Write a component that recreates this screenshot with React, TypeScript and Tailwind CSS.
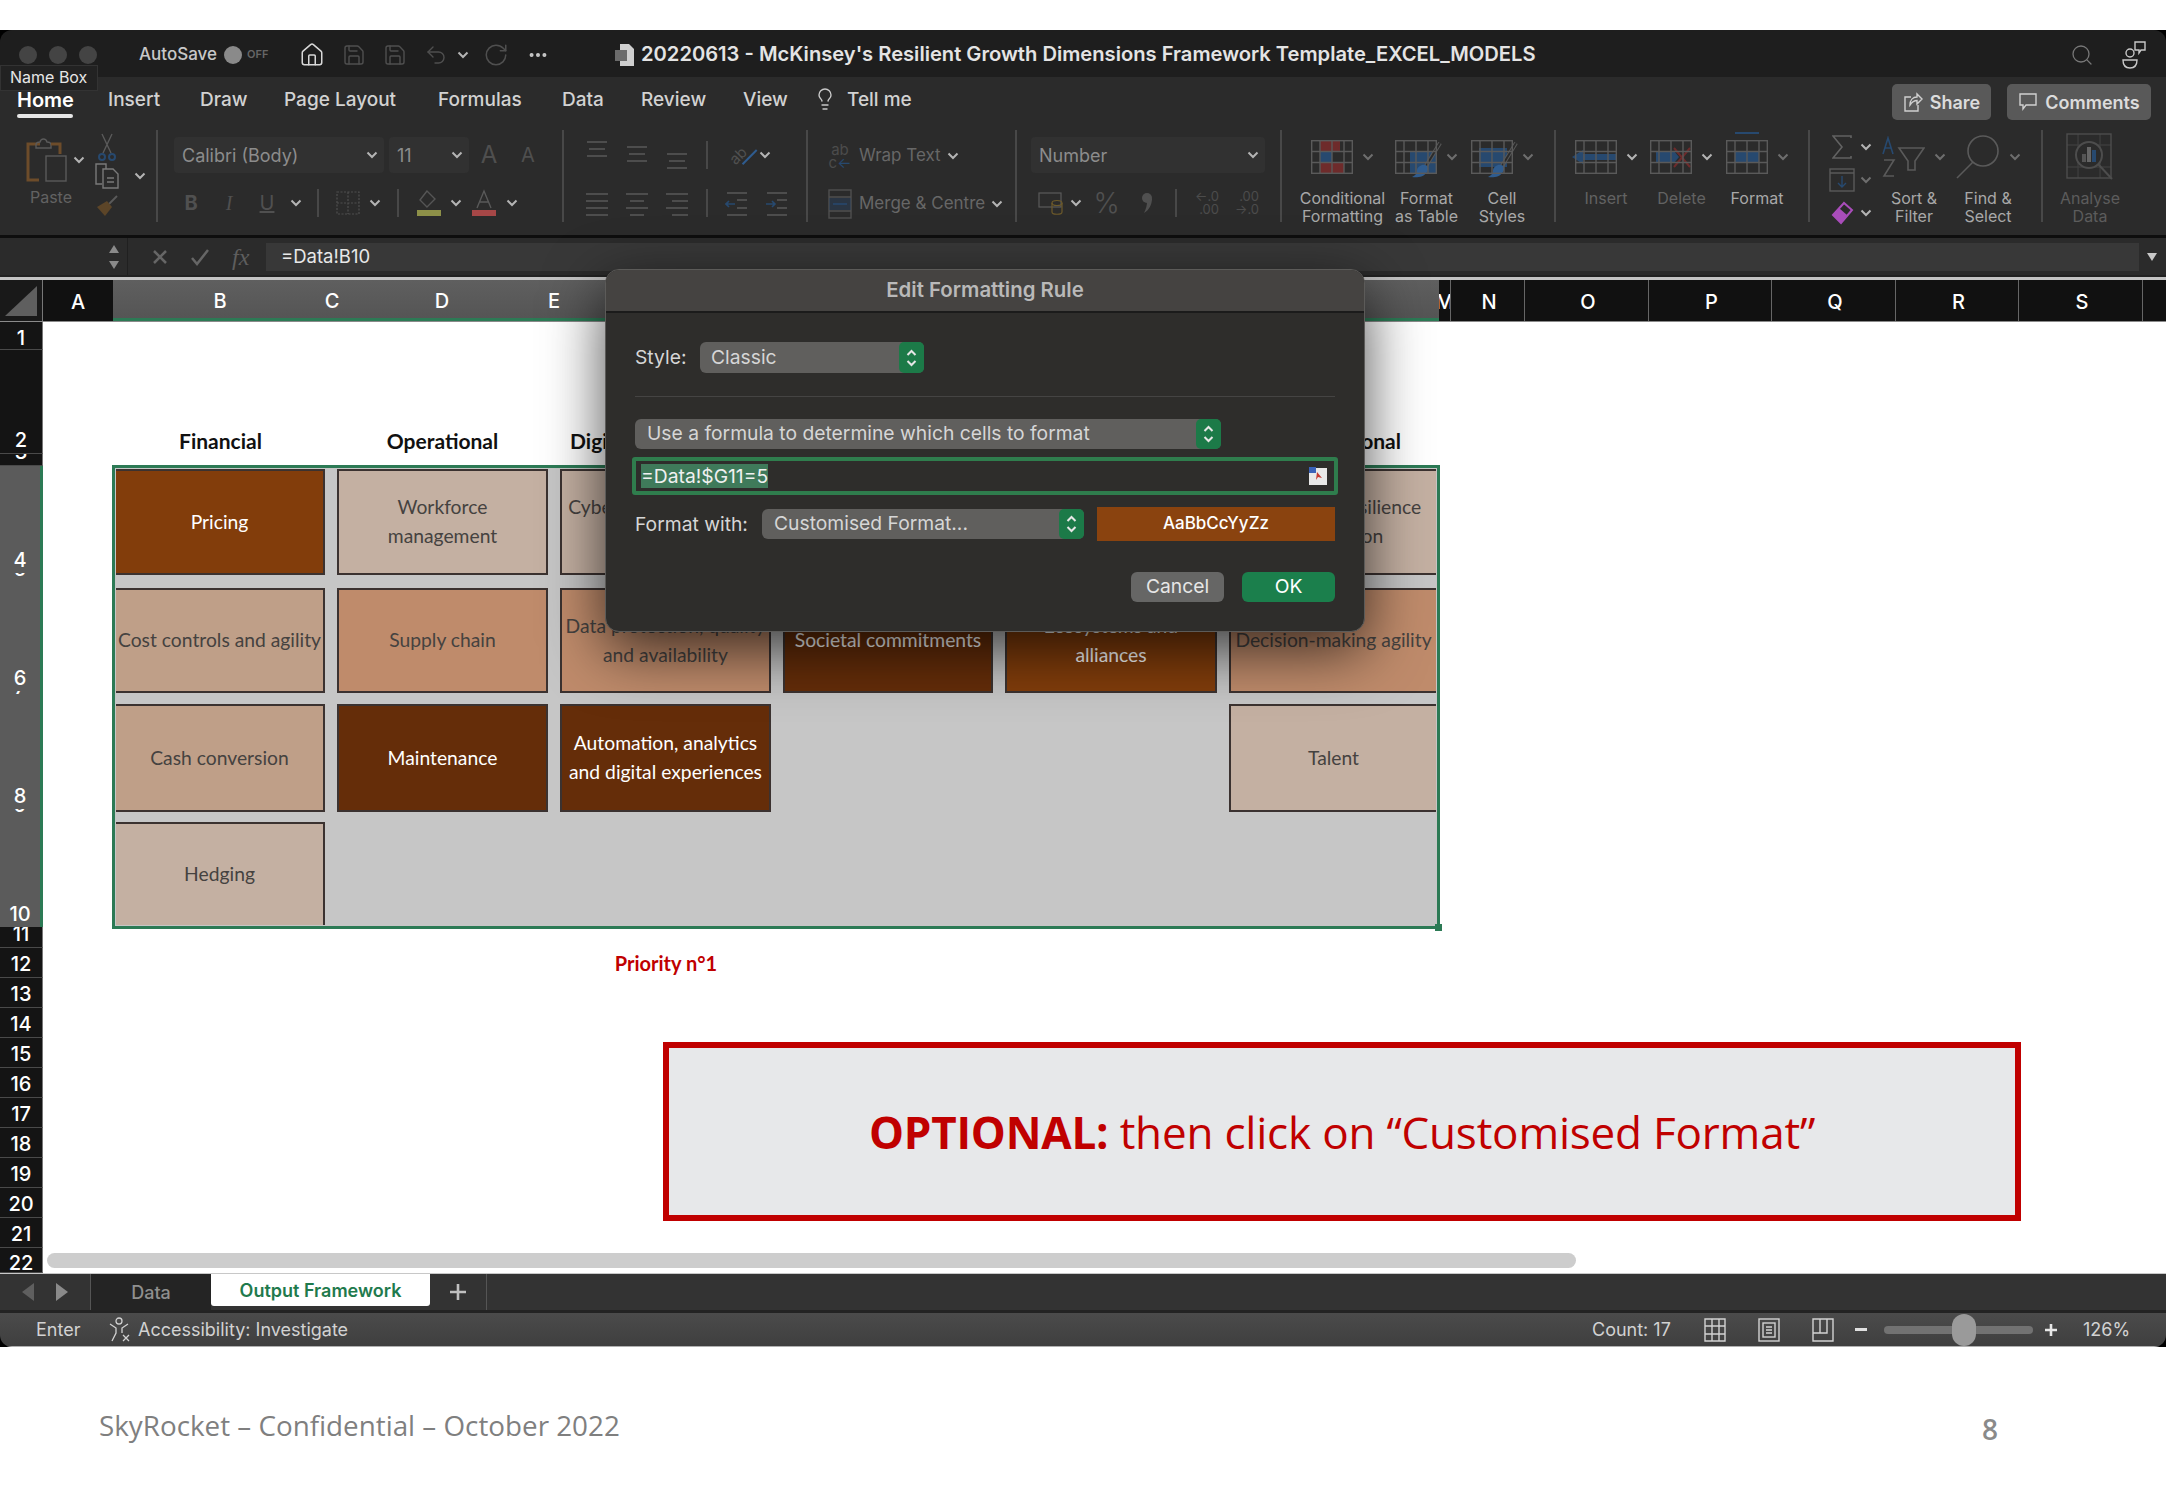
import { ReactNode } from 'react';
import { Ellipsis, House, Lightbulb, RotateCw, Save, Search, Undo2 } from 'lucide-react';

const DIM = '#5a5a5a';
const BLUE = '#27496f';
const RED = '#6e2b2b';

function Chev({ dim = false }: { dim?: boolean }) {
  return (
    <svg width="12" height="8" viewBox="0 0 12 8" className={dim ? 'text-[#6e6e6e] shrink-0' : 'text-[#b4b4b4] shrink-0'}>
      <path d="M1.5 1.5 6 6l4.5-4.5" fill="none" stroke="currentColor" strokeWidth="2" />
    </svg>
  );
}

function TableGrid({ children, top = false }: { children?: ReactNode; top?: boolean }) {
  return (
    <svg width="42" height="34" viewBox="0 0 42 34" className="shrink-0 overflow-visible">
      {children}
      <g fill="none" stroke={DIM} strokeWidth="1.4">
        <rect x="0.7" y="0.7" width="40.6" height="32.6" />
        <path d="M0 11.5h42M0 22.5h42M9 0v34M21 0v34M33 0v34" />
        {top && <path d="M9 -7h24" strokeWidth="2" stroke={BLUE} />}
      </g>
    </svg>
  );
}

function Brush() {
  return (
    <g>
      <path d="M45 3 31 26" stroke={DIM} strokeWidth="4" fill="none" />
      <path d="M45 3 31 26" stroke="#2b2b2b" strokeWidth="2" fill="none" />
      <path d="M27 25c5-1 8 3 5 7-3 5-10 6-15 5 4-2 5-4 5-7 0-2 2-4 5-5Z" fill="#2f5c8f" />
    </g>
  );
}

function Slot({ className, children }: { className: string; children?: ReactNode }) {
  return <div className={`flex items-center justify-center shrink-0 ${className}`}>{children}</div>;
}

function Sep() {
  return <div className="w-[2px] h-[28px] bg-[#484848]" />;
}

function Lines({ rows }: { rows: string[] }) {
  return (
    <svg width="24" height="30" viewBox="0 0 24 30">
      {rows.map((d, i) => (
        <path key={i} d={d} stroke={DIM} strokeWidth="1.6" fill="none" />
      ))}
    </svg>
  );
}

function Big({
  className,
  icon,
  label,
  dim = false,
  dimChev = false,
}: {
  className: string;
  icon: ReactNode;
  label: string[];
  dim?: boolean;
  dimChev?: boolean;
}) {
  return (
    <div className={`flex flex-col items-center shrink-0 ${className}`}>
      <div className="h-[54px] shrink-0 flex items-center gap-[9px]">
        {icon}
        <Chev dim={dimChev} />
      </div>
      <div className={`mt-[5px] shrink-0 text-[16px] leading-[18px] text-center whitespace-nowrap ${dim ? 'text-[#626262]' : 'text-[#a8a8a8]'}`}>
        {label.map((l) => (
          <div key={l}>{l}</div>
        ))}
      </div>
    </div>
  );
}

function Dropdown({ className, label }: { className: string; label: string }) {
  return (
    <div className={`h-[36px] rounded-[4px] bg-[#313131] flex items-center justify-between pl-[8px] pr-[6px] text-[18px] text-[#8c8c8c] shrink-0 ${className}`}>
      {label}
      <Chev />
    </div>
  );
}

function Ribbon() {
  return (
    <div className="h-[158px] bg-[#2b2b2b] shrink-0">
      <div className="h-[53px] flex justify-between pl-[17px] pr-[15px] pt-[7px]">
        <div className="flex text-[19px] text-[#d2d2d2] font-medium">
          <div className="w-[91px]">
            <div className="w-[56px] text-white font-semibold text-[20px] pt-[2px] h-[30px] leading-[28px]">Home</div>
            <div className="w-[56px] h-[4px] bg-[#e6e6e6] rounded-full" />
          </div>
          <div className="w-[92px] pt-[2px] leading-[28px]">Insert</div>
          <div className="w-[84px] pt-[2px] leading-[28px]">Draw</div>
          <div className="w-[154px] pt-[2px] leading-[28px]">Page Layout</div>
          <div className="w-[124px] pt-[2px] leading-[28px]">Formulas</div>
          <div className="w-[79px] pt-[2px] leading-[28px]">Data</div>
          <div className="w-[102px] pt-[2px] leading-[28px]">Review</div>
          <div className="w-[70px] pt-[2px] leading-[28px]">View</div>
          <div className="w-[34px] pt-[3px]">
            <Lightbulb size={24} strokeWidth={1.4} className="text-[#c8c8c8]" />
          </div>
          <div className="pt-[2px] leading-[28px]">Tell me</div>
        </div>
        <div className="flex gap-[16px] h-[36px] text-[18px] font-semibold text-[#dcdcdc]">
          <div className="w-[99px] rounded-[5px] bg-[#595959] flex items-center justify-center gap-[7px]">
            <svg width="20" height="22" viewBox="0 0 20 22" fill="none" stroke="#d0d0d0" strokeWidth="1.4">
              <path d="M8 6H2v14h13v-6M7 14c0-5 3-8 7-8V3l5 5-5 5V9.5c-3 0-5 1.5-7 4.5Z" />
            </svg>
            Share
          </div>
          <div className="w-[144px] rounded-[5px] bg-[#595959] flex items-center justify-center gap-[7px]">
            <svg width="20" height="22" viewBox="0 0 20 22" fill="none" stroke="#d0d0d0" strokeWidth="1.4">
              <path d="M2 3h16v11H8l-3 4v-4H2Z" />
            </svg>
            Comments
          </div>
        </div>
      </div>

      <div className="flex h-[92px]">
        {/* clipboard */}
        <div className="w-[158px] border-r-2 border-[#484848] flex pl-[26px] shrink-0">
          <div className="w-[60px] shrink-0">
            <div className="h-[44px] mt-[8px] flex items-center gap-[6px]">
              <svg width="41" height="44" viewBox="0 0 41 44" fill="none" className="shrink-0">
                <path d="M14 6H2v36h11" stroke="#6d4c2a" strokeWidth="3" />
                <path d="M10 7c0-3 3-3 4-3 1-4 6-4 7 0 1 0 4 0 4 3v3H10Z" stroke={DIM} strokeWidth="1.4" />
                <path d="M25 6h9v10" stroke="#6d4c2a" strokeWidth="3" />
                <rect x="20" y="18" width="20" height="25" stroke={DIM} strokeWidth="1.4" />
              </svg>
              <Chev />
            </div>
            <div className="w-[50px] text-center mt-[6px] text-[16px] leading-[18px] text-[#626262]">Paste</div>
          </div>
          <div className="flex flex-col">
            <Slot className="w-[42px] h-[33px]">
              <svg width="18" height="28" viewBox="0 0 18 28" fill="none" stroke={DIM} strokeWidth="1.4">
                <path d="M4 1l9 19M14 1 5 20" />
                <circle cx="4" cy="24" r="3" stroke={BLUE} strokeWidth="2" />
                <circle cx="14" cy="24" r="3" stroke={BLUE} strokeWidth="2" />
              </svg>
            </Slot>
            <div className="flex items-center h-[33px]">
              <Slot className="w-[42px]">
                <svg width="26" height="26" viewBox="0 0 26 26" fill="none" stroke="#7a7a7a" strokeWidth="1.4">
                  <path d="M8 21H2V1h10v5M9 6h10l5 5v14H9Z" />
                  <path d="M13 15h7M13 19h7" />
                </svg>
              </Slot>
              <div className="ml-[6px]">
                <Chev />
              </div>
            </div>
            <Slot className="w-[42px] h-[33px]">
              <svg width="24" height="24" viewBox="0 0 24 24" fill="none">
                <path d="M14 10 22 2" stroke={DIM} strokeWidth="2" />
                <path d="M2 13 12 7l5 6-7 9Z" fill="#5c4528" />
              </svg>
            </Slot>
          </div>
        </div>

        {/* font */}
        <div className="w-[406px] border-r-2 border-[#484848] shrink-0 flex flex-col">
          <div className="h-[50px] flex items-start pt-[7px] pl-[16px]">
            <Dropdown className="w-[210px] mr-[5px]" label="Calibri (Body)" />
            <Dropdown className="w-[80px]" label="11" />
            <Slot className="w-[40px] h-[36px] text-[24px] text-[#4f4f4f]">A</Slot>
            <Slot className="w-[38px] h-[36px] text-[20px] text-[#4f4f4f]">A</Slot>
          </div>
          <div className="h-[42px] pt-[4px] flex items-center pl-[14px] text-[20px] text-[#505050]">
            <Slot className="w-[38px] font-bold">B</Slot>
            <Slot className="w-[38px] italic font-['Liberation_Serif',serif]">I</Slot>
            <Slot className="w-[38px] underline">U</Slot>
            <Slot className="w-[20px]"><Chev /></Slot>
            <Slot className="w-[24px]"><Sep /></Slot>
            <Slot className="w-[36px]">
              <svg width="24" height="24" viewBox="0 0 24 24" fill="none" stroke="#4f4f4f" strokeWidth="1.2" strokeDasharray="2 1.5">
                <path d="M1 1h22v22H1ZM12 1v22M1 12h22" />
              </svg>
            </Slot>
            <Slot className="w-[18px]"><Chev /></Slot>
            <Slot className="w-[28px]"><Sep /></Slot>
            <Slot className="w-[34px]">
              <svg width="26" height="28" viewBox="0 0 26 28" fill="none">
                <path d="M11 2 4 11l7 7 8-8Z" stroke="#555" strokeWidth="1.4" />
                <rect x="1" y="21" width="24" height="6" fill="#8d9048" />
              </svg>
            </Slot>
            <Slot className="w-[20px]"><Chev /></Slot>
            <Slot className="w-[36px]">
              <svg width="26" height="28" viewBox="0 0 26 28" fill="none">
                <path d="M6 19 13 2l7 17M9 13h8" stroke="#595959" strokeWidth="1.4" />
                <rect x="1" y="21" width="24" height="6" fill="#a64747" />
              </svg>
            </Slot>
            <Slot className="w-[20px]"><Chev /></Slot>
          </div>
        </div>

        {/* alignment */}
        <div className="w-[244px] border-r-2 border-[#484848] shrink-0 flex flex-col pl-[13px]">
          <div className="h-[50px] flex items-center">
            <Slot className="w-[40px]"><Lines rows={['M2 2h20', 'M4 9h16', 'M2 16h20']} /></Slot>
            <Slot className="w-[40px]"><Lines rows={['M2 7h20', 'M4 14h16', 'M2 21h20']} /></Slot>
            <Slot className="w-[40px]"><Lines rows={['M2 14h20', 'M4 21h16', 'M2 28h20']} /></Slot>
            <Slot className="w-[20px]"><Sep /></Slot>
            <Slot className="w-[42px]">
              <div className="text-[15px] leading-none text-[#505050] -rotate-45 relative">
                ab
                <span className="absolute left-[6px] top-[16px] w-[20px] h-[2px] bg-[#2f5c8f]" />
              </div>
            </Slot>
            <Slot className="w-[12px]"><Chev /></Slot>
          </div>
          <div className="h-[42px] pt-[4px] flex items-center">
            <Slot className="w-[40px]"><Lines rows={['M1 6h22', 'M1 13h22', 'M1 20h22', 'M1 27h22']} /></Slot>
            <Slot className="w-[40px]"><Lines rows={['M1 6h22', 'M5 13h14', 'M1 20h22', 'M5 27h14']} /></Slot>
            <Slot className="w-[40px]"><Lines rows={['M1 6h22', 'M7 13h16', 'M1 20h22', 'M7 27h16']} /></Slot>
            <Slot className="w-[20px]"><Sep /></Slot>
            <Slot className="w-[40px]">
              <svg width="24" height="30" viewBox="0 0 24 30" fill="none" stroke={DIM} strokeWidth="1.6">
                <path d="M2 5h20M12 12h10M12 20h10M2 27h20" />
                <path d="M10 16H1m3-3-3 3 3 3" stroke={BLUE} />
              </svg>
            </Slot>
            <Slot className="w-[40px]">
              <svg width="24" height="30" viewBox="0 0 24 30" fill="none" stroke={DIM} strokeWidth="1.6">
                <path d="M2 5h20M12 12h10M12 20h10M2 27h20" />
                <path d="M1 16h9m-3-3 3 3-3 3" stroke={BLUE} />
              </svg>
            </Slot>
          </div>
        </div>

        {/* wrap / merge */}
        <div className="w-[209px] border-r-2 border-[#484848] shrink-0 flex flex-col pl-[18px] text-[17px] text-[#676767]">
          <div className="h-[50px] flex items-center pt-[2px]">
            <Slot className="w-[28px]">
              <div className="text-[15px] leading-[13px] text-[#4c4c4c] text-center">ab<br />c<span className="text-[#27496f]">←</span></div>
            </Slot>
            <span className="ml-[5px] mr-[6px] whitespace-nowrap">Wrap Text</span>
            <Chev />
          </div>
          <div className="h-[42px] pt-[6px] flex items-center">
            <Slot className="w-[28px]">
              <svg width="24" height="30" viewBox="0 0 24 30" fill="none" stroke="#505050" strokeWidth="1.4">
                <rect x="1" y="1" width="22" height="28" />
                <path d="M1 8h22M1 22h22" />
                <rect x="1" y="9" width="22" height="12" fill={BLUE} stroke="none" opacity="0.35" />
                <path d="M5 15h14" stroke={BLUE} />
              </svg>
            </Slot>
            <span className="ml-[5px] mr-[6px] whitespace-nowrap">Merge &amp; Centre</span>
            <Chev />
          </div>
        </div>

        {/* number */}
        <div className="w-[265px] border-r-2 border-[#484848] shrink-0 flex flex-col">
          <div className="h-[50px] flex items-start pt-[7px] pl-[14px]">
            <Dropdown className="w-[234px]" label="Number" />
          </div>
          <div className="h-[42px] pt-[4px] flex items-center pl-[18px] text-[#505050]">
            <Slot className="w-[31px]">
              <svg width="26" height="26" viewBox="0 0 26 26" fill="none" stroke={DIM} strokeWidth="1.2">
                <rect x="1" y="3" width="22" height="14" />
                <ellipse cx="19" cy="13" rx="5" ry="2.5" stroke="#6d5a2a" />
                <path d="M14 13v9c0 3 10 3 10 0v-9" stroke="#6d5a2a" />
              </svg>
            </Slot>
            <Slot className="w-[20px]"><Chev /></Slot>
            <Slot className="w-[41px] text-[28px] font-light">%</Slot>
            <Slot className="w-[39px]">
              <svg width="12" height="22" viewBox="0 0 12 22" fill="#505050">
                <circle cx="6" cy="6" r="5" />
                <path d="M11 6c0 7-3 12-8 15 2-4 3-8 3-11Z" />
              </svg>
            </Slot>
            <Slot className="w-[20px]"><Sep /></Slot>
            <Slot className="w-[42px]">
              <div className="text-[13px] leading-[13px] text-[#4c4c4c] text-right">←.0<br />.00</div>
            </Slot>
            <Slot className="w-[38px]">
              <div className="text-[13px] leading-[13px] text-[#4c4c4c] text-right">.00<br />→.0</div>
            </Slot>
          </div>
        </div>

        {/* styles */}
        <div className="w-[274px] border-r-2 border-[#484848] shrink-0 flex pl-[18px]">
          <Big
            className="w-[85px]"
            dimChev
            label={['Conditional', 'Formatting']}
            icon={
              <TableGrid>
                <rect x="9" y="0" width="20" height="11" fill={RED} />
                <rect x="9" y="12" width="12" height="10" fill={BLUE} />
                <rect x="9" y="23" width="24" height="11" fill={RED} />
              </TableGrid>
            }
          />
          <Big
            className="w-[83px]"
            dimChev
            label={['Format', 'as Table']}
            icon={
              <TableGrid>
                <rect x="15" y="11" width="27" height="23" fill={BLUE} />
                <Brush />
              </TableGrid>
            }
          />
          <Big
            className="w-[68px]"
            dimChev
            label={['Cell', 'Styles']}
            icon={
              <TableGrid>
                <rect x="8" y="8" width="28" height="19" fill={BLUE} />
                <Brush />
              </TableGrid>
            }
          />
        </div>

        {/* cells */}
        <div className="w-[254px] border-r-2 border-[#484848] shrink-0 flex pl-[12px]">
          <Big
            className="w-[76px]"
            dim
            label={['Insert']}
            icon={
              <TableGrid>
                <path d="M-3 17 8 10v4h34v6H8v4Z" fill={BLUE} />
              </TableGrid>
            }
          />
          <Big
            className="w-[75px]"
            dim
            label={['Delete']}
            icon={
              <TableGrid>
                <path d="M6 11h18l5 6-5 6H6Z" fill={BLUE} />
                <path d="M24 8l16 19M40 8 24 27" stroke={RED} strokeWidth="2" fill="none" />
              </TableGrid>
            }
          />
          <Big
            className="w-[76px]"
            dimChev
            label={['Format']}
            icon={
              <TableGrid top>
                <rect x="9" y="12" width="24" height="10" fill={BLUE} />
              </TableGrid>
            }
          />
        </div>

        {/* editing */}
        <div className="w-[233px] border-r-2 border-[#484848] shrink-0 flex pl-[14px]">
          <div className="w-[54px] shrink-0 flex flex-col">
            <div className="h-[33px] shrink-0 flex items-center">
              <Slot className="w-[36px] text-[#555]">
                <svg width="20" height="24" viewBox="0 0 20 24" fill="none" stroke="#626262" strokeWidth="1.6">
                  <path d="M19 3V1H1l9 11-9 11h18v-2" />
                </svg>
              </Slot>
              <Chev />
            </div>
            <div className="h-[33px] shrink-0 flex items-center">
              <Slot className="w-[36px]">
                <svg width="26" height="24" viewBox="0 0 26 24" fill="none" stroke="#5a5a5a" strokeWidth="1.4">
                  <rect x="1" y="1" width="24" height="22" />
                  <path d="M1 5h24" />
                  <path d="M13 8v11m-4-4 4 4 4-4" stroke={BLUE} />
                </svg>
              </Slot>
              <Chev dim />
            </div>
            <div className="h-[33px] shrink-0 flex items-center">
              <Slot className="w-[36px]">
                <svg width="24" height="24" viewBox="0 0 24 24" fill="none">
                  <path d="M3 14 14 2l8 7-11 13Z" stroke="#a94dba" strokeWidth="2" />
                  <path d="M3 14l6-7 8 7-6 8Z" fill="#a94dba" />
                </svg>
              </Slot>
              <Chev />
            </div>
          </div>
          <Big
            className="w-[72px]"
            dimChev
            label={['Sort &', 'Filter']}
            icon={
              <svg width="43" height="42" viewBox="0 0 43 42" fill="none" className="shrink-0">
                <path d="M1 18 6 2l5 16M3 12h6" stroke={BLUE} strokeWidth="1.6" />
                <path d="M2 24h10L2 40h10" stroke={DIM} strokeWidth="1.6" />
                <path d="M17 12h25l-9 13v9h-7v-9Z" stroke={DIM} strokeWidth="1.6" />
              </svg>
            }
          />
          <Big
            className="w-[76px]"
            dimChev
            label={['Find &', 'Select']}
            icon={
              <svg width="45" height="44" viewBox="0 0 45 44" fill="none" stroke={DIM} strokeWidth="1.6" className="shrink-0">
                <circle cx="28" cy="16" r="15" />
                <path d="M18 27 2 43" />
              </svg>
            }
          />
        </div>

        {/* analyse */}
        <div className="w-[94px] shrink-0 flex flex-col items-center">
          <div className="h-[54px] shrink-0 flex items-center">
            <svg width="48" height="48" viewBox="0 0 48 48" fill="none" stroke="#4d4d4d" strokeWidth="1.4">
              <rect x="1" y="1" width="44" height="44" />
              <path d="M1 12h44M1 34h44M12 1v44M34 1v44" opacity="0.5" />
              <circle cx="23" cy="22" r="13" fill="#2b2b2b" strokeWidth="2" />
              <path d="M32 31 46 46" strokeWidth="2" />
              <rect x="16" y="21" width="4" height="8" fill="#555" stroke="none" />
              <rect x="21" y="14" width="4" height="15" fill="#666" stroke="none" />
              <rect x="26" y="17" width="4" height="12" fill={BLUE} stroke="none" />
            </svg>
          </div>
          <div className="mt-[5px] shrink-0 text-[16px] leading-[18px] text-center text-[#5c5c5c]">
            Analyse
            <br />
            Data
          </div>
        </div>
      </div>
    </div>
  );
}

function ColHeader() {
  const right = [
    ['N', 'w-[74px]'],
    ['O', 'w-[124px]'],
    ['P', 'w-[123px]'],
    ['Q', 'w-[124px]'],
    ['R', 'w-[123px]'],
    ['S', 'w-[124px]'],
  ];
  return (
    <div className="h-[42px] flex shrink-0 text-[20px] font-medium text-white border-b border-[#8a8a8a]">
      <div className="w-[43px] bg-[#191919] flex items-end justify-end p-[5px] border-r border-[#777] shrink-0">
        <div className="w-[32px] h-[30px] bg-[#5f5f5f] [clip-path:polygon(100%_0,100%_100%,0_100%)]" />
      </div>
      <div className="w-[70px] bg-[#111] flex items-center justify-center pt-[3px] shrink-0">A</div>
      <div className="w-[1326px] flex shrink-0 pt-[3px] bg-gradient-to-b from-[#5f5f5f] to-[#555] border-b-[3px] border-[#2c7a55]">
        <Slot className="w-[214px]">B</Slot>
        <Slot className="w-[10px]">C</Slot>
        <Slot className="w-[210px]">D</Slot>
        <Slot className="w-[14px]">E</Slot>
      </div>
      <div className="w-[12px] bg-[#111] flex items-center justify-center overflow-hidden border-r border-[#666] pt-[3px] shrink-0">M</div>
      {right.map(([l, w]) => (
        <div key={l} className={`bg-[#111] flex items-center justify-center border-r border-[#666] pt-[3px] pl-[3px] shrink-0 ${w}`}>
          {l}
        </div>
      ))}
      <div className="flex-1 bg-[#111]" />
    </div>
  );
}

function RowHeaders() {
  const rows: [string, string, boolean][] = [
    ['1', 'h-[28px]', false],
    ['2', 'h-[104px]', false],
    ['3', 'h-[12px]', false],
    ['4', 'h-[107px]', true],
    ['5', 'h-[9px]', true],
    ['6', 'h-[109px]', true],
    ['7', 'h-[9px]', true],
    ['8', 'h-[109px]', true],
    ['9', 'h-[9px]', true],
    ['10', 'h-[109px]', true],
    ['11', 'h-[21px]', false],
    ['12', 'h-[30px]', false],
    ['13', 'h-[30px]', false],
    ['14', 'h-[30px]', false],
    ['15', 'h-[30px]', false],
    ['16', 'h-[30px]', false],
    ['17', 'h-[30px]', false],
    ['18', 'h-[30px]', false],
    ['19', 'h-[30px]', false],
    ['20', 'h-[30px]', false],
    ['21', 'h-[30px]', false],
    ['22', 'h-[25px]', false],
  ];
  return (
    <div className="w-[43px] shrink-0 flex flex-col text-[20px] font-medium text-white">
      {rows.map(([label, h, selected]) => (
        <div
          key={label}
          className={`${h} overflow-hidden flex items-end justify-center leading-[24px] ${
            selected ? 'bg-[#5b5b5b] border-r-[3px] border-[#2c7a55]' : 'bg-[#141414] border-b border-[#4a4a4a] border-r border-r-[#777]'
          }`}
        >
          <span className={`pb-[1px] ${label === '22' ? 'translate-y-[4px]' : label === '1' ? 'translate-y-[2px]' : ''}`}>{label}</span>
        </div>
      ))}
    </div>
  );
}

function Card({ className, children }: { className: string; children?: ReactNode }) {
  return (
    <div className={`flex items-center justify-center text-center border-[#3b3230] text-[19.3px] leading-[29px] pb-[2px] whitespace-nowrap overflow-hidden ${className}`}>
      {children}
    </div>
  );
}

const LIGHT = 'bg-[#c4b0a2] text-[#454240] border-2';
const TAN = 'bg-[#bf9f88] text-[#454240] border-2';
const MID = 'bg-[#bf8b6b] text-[#454240] border-2';
const RUST = 'bg-[#823d0b] text-white border-2';
const DARK = 'bg-[#652d09] text-white border-2';

function Sheet() {
  return (
    <div className="flex-1 flex min-h-0 relative">
      <RowHeaders />
      <div className="flex-1 bg-white pt-[104px] pl-[69px] font-['Lato',sans-serif] overflow-hidden">
        <div className="h-[30px] ml-[4px] grid grid-cols-[209px_211px_211px_210px_212px_207px] gap-x-[12px] text-[21px] font-bold text-[#111] text-center leading-[30px] mb-[9px] whitespace-nowrap">
          <div>Financial</div>
          <div>Operational</div>
          <div>Digital &amp; technology</div>
          <div />
          <div />
          <div>Organizational</div>
        </div>
        <div className="w-[1328px] h-[464px] border-[3px] border-[#2c7a55] bg-[#c6c6c6] pt-[1px] pl-[1px] relative">
          <div className="grid grid-cols-[209px_211px_211px_210px_212px_207px] gap-x-[12px] grid-rows-[119px_116px_118px_103px] items-start">
            <Card className={`h-[106px] border-l-0 ${RUST}`}>Pricing</Card>
            <Card className={`h-[106px] ${LIGHT}`}>
              <span>Workforce<br />management</span>
            </Card>
            <Card className={`h-[106px] ${LIGHT}`}>
              <span>Cybersecurity and data<br />trust</span>
            </Card>
            <Card className={`h-[106px] ${TAN}`} />
            <Card className={`h-[106px] ${TAN}`} />
            <Card className={`h-[106px] border-r-0 ${LIGHT}`}>
              <span>Leadership resilience<br />and mission</span>
            </Card>

            <Card className={`h-[105px] border-l-0 ${TAN}`}>Cost controls and agility</Card>
            <Card className={`h-[105px] ${MID}`}>Supply chain</Card>
            <Card className={`h-[105px] ${MID}`}>
              <span>Data protection, quality<br />and availability</span>
            </Card>
            <Card className={`h-[105px] ${DARK}`}>Societal commitments</Card>
            <Card className={`h-[105px] ${RUST}`}>
              <span>Ecosystems and<br />alliances</span>
            </Card>
            <Card className={`h-[105px] border-r-0 ${MID}`}>Decision-making agility</Card>

            <Card className={`h-[108px] border-l-0 ${TAN}`}>Cash conversion</Card>
            <Card className={`h-[108px] ${DARK}`}>Maintenance</Card>
            <Card className={`h-[108px] ${DARK}`}>
              <span>Automation, analytics<br />and digital experiences</span>
            </Card>
            <div />
            <div />
            <Card className={`h-[108px] border-r-0 ${LIGHT}`}>Talent</Card>

            <Card className={`h-[103px] border-l-0 border-b-0 ${LIGHT}`}>Hedging</Card>
          </div>
          {/* fill handle */}
          <div className="absolute -right-[5px] -bottom-[5px] w-[7px] h-[7px] bg-[#2c7a55]" />
        </div>
        <div className="w-[1108px] mt-[19px] text-center text-[20px] leading-[30px] font-bold text-[#c00000]">Priority n°1</div>
      </div>

      {/* callout sits over the sheet */}
      <div className="absolute left-[663px] top-[720px] w-[1358px] h-[179px] border-[6px] border-[#c00000] bg-[#e7e8ea] flex items-center justify-center font-['Open_Sans',sans-serif] text-[44px] tracking-[-0.2px] text-[#c00000]">
        <span>
          <b>OPTIONAL:</b> then click on “Customised Format”
        </span>
      </div>

      {/* scrollbar overlay */}
      <div className="absolute left-[47px] bottom-[5px] w-[1529px] h-[15px] rounded-full bg-[#cdcdcd]" />
    </div>
  );
}

function Stepper() {
  return (
    <div className="w-[25px] h-full rounded-[5px] bg-[#1c7a48] flex items-center justify-center shrink-0">
      <svg width="13" height="20" viewBox="0 0 13 20" fill="none" stroke="#e6e6e6" strokeWidth="2">
        <path d="M2.5 7 6.5 3l4 4M2.5 13l4 4 4-4" />
      </svg>
    </div>
  );
}

function Dialog() {
  return (
    <div className="absolute left-[605px] top-[269px] w-[760px] h-[363px] rounded-[14px] bg-[#2e2d2b] border border-[#5c5b59] shadow-[0_18px_60px_rgba(0,0,0,0.7)] text-[19.3px] text-[#d6d6d6] overflow-hidden">
      <div className="h-[43px] bg-[#454341] border-b-2 border-[#1b1b1b] flex items-center justify-center text-[20.4px] font-semibold text-[#b9b9b9]">
        Edit Formatting Rule
      </div>
      <div className="px-[29px] pt-[29px]">
        <div className="flex items-center h-[31px]">
          <div className="w-[65px]">Style:</div>
          <div className="w-[224px] h-full rounded-[6px] bg-[#605f5d] flex items-center justify-between pl-[11px]">
            <span className="pb-[1px]">Classic</span>
            <Stepper />
          </div>
        </div>
        <div className="h-px bg-[#454443] mt-[23px]" />
        <div className="w-[586px] h-[30px] mt-[22px] rounded-[6px] bg-[#605f5d] flex items-center justify-between pl-[12px]">
          <span className="pb-[2px]">Use a formula to determine which cells to format</span>
          <Stepper />
        </div>
        <div className="h-[38px] mt-[8px] -mx-[3px] rounded-[3px] border-[4px] border-[#2f7d4d] bg-[#2e2d2b] flex items-center justify-between pl-[5px] pr-[6px]">
          <span className="bg-[#3f7a5a] text-[#f0f0f0] leading-[24px]">=Data!$G11=5</span>
          <svg width="20" height="20" viewBox="0 0 20 20">
            <rect x="1" y="2" width="18" height="17" fill="#e8e8e8" />
            <rect x="1" y="1" width="7" height="6" fill="#3a62b8" />
            <path d="M9 6l5 6-4-1-2 3Z" fill="#c5392f" />
          </svg>
        </div>
        <div className="flex items-center h-[34px] mt-[12px]">
          <div className="w-[127px] shrink-0">Format with:</div>
          <div className="w-[322px] h-[30px] rounded-[6px] bg-[#605f5d] flex items-center justify-between pl-[12px] shrink-0">
            <span className="pb-[1px]">Customised Format...</span>
            <Stepper />
          </div>
          <div className="ml-[13px] flex-1 h-full bg-[#8a430f] flex items-center justify-center text-white text-[17px] font-medium">
            AaBbCcYyZz
          </div>
        </div>
        <div className="flex justify-end gap-[18px] mt-[31px]">
          <div className="w-[93px] h-[30px] pb-[2px] rounded-[6px] bg-[#666665] flex items-center justify-center text-[#e6e6e6]">Cancel</div>
          <div className="w-[93px] h-[30px] pb-[2px] rounded-[6px] bg-[#1b7f4c] flex items-center justify-center text-white">OK</div>
        </div>
      </div>
    </div>
  );
}

function TitleBar() {
  return (
    <div className="h-[47px] bg-[#1e1e1e] flex items-center pt-[2px] shrink-0 relative">
      <div className="flex gap-[12px] pl-[19px] w-[139px] shrink-0">
        <span className="w-[18px] h-[18px] rounded-full bg-[#444]" />
        <span className="w-[18px] h-[18px] rounded-full bg-[#444]" />
        <span className="w-[18px] h-[18px] rounded-full bg-[#444]" />
      </div>
      <span className="text-[17px] text-[#c8c8c8] font-medium w-[85px] shrink-0">AutoSave</span>
      <span className="w-[18px] h-[18px] rounded-full bg-[#8a8a8a] shrink-0" />
      <span className="ml-[5px] text-[11px] text-[#666] font-semibold w-[54px] shrink-0">OFF</span>
      <div className="flex items-center text-[#9a9a9a] w-[318px] shrink-0">
        <House size={26} strokeWidth={1.4} className="text-[#d8d8d8] -ml-[2px]" />
        <Save size={24} strokeWidth={1.4} className="ml-[17px] text-[#4f4f4f]" />
        <Save size={24} strokeWidth={1.4} className="ml-[17px] text-[#4f4f4f]" />
        <Undo2 size={24} strokeWidth={1.4} className="ml-[17px] text-[#4f4f4f]" />
        <span className="ml-[9px] mr-[14px]"><Chev /></span>
        <RotateCw size={26} strokeWidth={1.4} className="text-[#4f4f4f]" />
        <Ellipsis size={22} strokeWidth={2.4} className="ml-[18px] text-[#c8c8c8]" />
      </div>
      <svg width="20" height="24" viewBox="0 0 20 24" className="shrink-0 -ml-[4px]">
        <path d="M5 1h9l5 5v17H5Z" fill="#cfcfcf" />
        <rect x="0" y="7" width="12" height="11" fill="#6b6b6b" />
      </svg>
      <span className="ml-[6px] text-[20.15px] font-semibold text-[#e4e4e4] whitespace-nowrap">
        20220613 - McKinsey's Resilient Growth Dimensions Framework Template_EXCEL_MODELS
      </span>
      <div className="ml-auto flex items-center pr-[19px] gap-[27px]">
        <Search size={24} strokeWidth={1.3} className="text-[#777]" />
        <svg width="26" height="30" viewBox="0 0 26 30" fill="none" stroke="#c8c8c8" strokeWidth="1.4">
          <path d="M14 2h10v8h-4l-2 3v-3h-4Z" />
          <circle cx="9" cy="13" r="4" />
          <path d="M2 20h14c0 6-3 8-7 8s-7-2-7-8Z" />
        </svg>
      </div>
      {/* tooltip hanging over the ribbon */}
      <div className="absolute left-0 top-[35px] w-[98px] h-[26px] bg-[#222] border border-[#333] text-[16px] leading-[22px] text-[#e6e6e6] pl-[9px] z-10">
        Name Box
      </div>
    </div>
  );
}

function FormulaBar() {
  return (
    <>
      <div className="h-[3px] bg-[#0e0e0e] shrink-0" />
      <div className="h-[37px] bg-[#2b2b2b] flex items-center shrink-0">
        <div className="w-[128px] h-full flex items-center justify-end pr-[8px] border-r border-[#202020] shrink-0">
          <svg width="10" height="30" viewBox="0 0 10 30" fill="#8a8a8a">
            <path d="M5 3l5 8H0ZM5 27l-5-8h10Z" />
          </svg>
        </div>
        <svg width="16" height="18" viewBox="0 0 16 18" fill="none" stroke="#666" strokeWidth="2.5" className="ml-[24px] shrink-0">
          <path d="M2 3l12 12M14 3 2 15" />
        </svg>
        <svg width="20" height="18" viewBox="0 0 20 18" fill="none" stroke="#666" strokeWidth="2.5" className="ml-[22px] shrink-0">
          <path d="M2 10l5 6L18 2" />
        </svg>
        <span className="ml-[22px] w-[34px] font-['Liberation_Serif',serif] italic text-[24px] text-[#5e5e5e] shrink-0">fx</span>
        <div className="w-[1873px] h-[28px] bg-[#383838] flex items-center pl-[15px] text-[18.5px] text-[#e8e8e8] shrink-0">=Data!B10</div>
        <svg width="10" height="10" viewBox="0 0 10 10" fill="#c8c8c8" className="ml-[8px] shrink-0">
          <path d="M0 1h10L5 9Z" />
        </svg>
      </div>
      <div className="h-[2px] bg-[#222] shrink-0" />
      <div className="h-[3px] bg-[#c4c4c4] shrink-0" />
    </>
  );
}

function TabBar() {
  return (
    <>
      <div className="h-[37px] bg-[#333] border-t border-[#c8c8c8] flex shrink-0 relative">
        <div className="w-[91px] border-r border-[#555] flex items-center justify-center gap-[22px] text-[#5f5f5f] shrink-0">
          <svg width="12" height="18" viewBox="0 0 12 18" fill="currentColor"><path d="M12 0v18L0 9Z" /></svg>
          <svg width="12" height="18" viewBox="0 0 12 18" fill="#8a8a8a"><path d="M0 0v18L12 9Z" /></svg>
        </div>
        <div className="w-[120px] h-[37px] bg-[#242424] flex items-center justify-center text-[18px] text-[#8f8f8f] font-medium shrink-0">Data</div>
        <div className="w-[219px] h-[32px] bg-white rounded-b-[3px] flex items-center justify-center text-[18px] font-semibold text-[#1f7a4d] shrink-0">
          Output Framework
        </div>
        <div className="w-[57px] border-r border-[#555] flex items-center justify-center text-[#c0c0c0] shrink-0">
          <svg width="16" height="16" viewBox="0 0 16 16" stroke="currentColor" strokeWidth="2.6">
            <path d="M8 0v16M0 8h16" />
          </svg>
        </div>
      </div>
      <div className="h-[3px] bg-[#232323] shrink-0" />
      <div className="h-[34px] bg-gradient-to-b from-[#4b4b4b] to-[#3f3f3f] border-b border-[#b0b0b0] flex items-center justify-between pr-[37px] pl-[36px] text-[18px] text-[#d2d2d2] shrink-0">
        <div className="flex items-center">
          <span className="w-[73px]">Enter</span>
          <svg width="22" height="26" viewBox="0 0 22 26" fill="none" stroke="#d2d2d2" strokeWidth="1.3">
            <circle cx="10" cy="4" r="3" />
            <path d="M1 7l6 4v5l-4 8M19 7l-6 4v5M14 18l6 6M20 18l-6 6" />
          </svg>
          <span className="ml-[7px]">Accessibility: Investigate</span>
        </div>
        <div className="flex items-center">
          <span className="w-[80px] whitespace-nowrap">Count: 17</span>
          <svg width="22" height="24" viewBox="0 0 22 24" fill="none" stroke="#d2d2d2" strokeWidth="1.4" className="ml-[32px]">
            <path d="M1 1h20v22H1ZM1 8h20M1 16h20M8 1v22M15 1v22" />
          </svg>
          <svg width="22" height="24" viewBox="0 0 22 24" fill="none" stroke="#d2d2d2" strokeWidth="1.4" className="ml-[32px]">
            <rect x="1" y="1" width="20" height="22" />
            <rect x="5" y="5" width="12" height="14" />
            <path d="M8 9h6M8 12h6M8 15h6" />
          </svg>
          <svg width="22" height="24" viewBox="0 0 22 24" fill="none" stroke="#d2d2d2" strokeWidth="1.4" className="ml-[32px]">
            <path d="M1 1h20v22H1ZM1 15h14V1M8 1v14" />
          </svg>
          <div className="w-[12px] h-[3px] bg-[#e0e0e0] ml-[21px]" />
          <div className="w-[149px] h-[8px] rounded-full bg-[#727272] ml-[17px] relative">
            <div className="absolute left-[68px] -top-[12px] w-[24px] h-[32px] rounded-full bg-[#9a9a9a]" />
          </div>
          <svg width="12" height="12" viewBox="0 0 12 12" stroke="#e8e8e8" strokeWidth="2.6" className="ml-[12px]">
            <path d="M6 0v12M0 6h12" />
          </svg>
          <span className="ml-[26px] w-[46px]">126%</span>
        </div>
      </div>
    </>
  );
}

export default function App() {
  return (
    <div className="w-[2166px] h-[1500px] bg-white overflow-hidden font-['Inter',sans-serif] relative">
      <div className="h-[30px]" />
      <div className="h-[1317px] bg-black">
        <div className="h-full rounded-[12px] overflow-hidden flex flex-col">
          <TitleBar />
          <Ribbon />
          <FormulaBar />
          <ColHeader />
          <Sheet />
          <TabBar />
        </div>
      </div>
      <Dialog />
      <div className="flex justify-between pl-[99px] pr-[168px] pt-[58px] font-['Open_Sans',sans-serif] text-[#7f7f7f]">
        <span className="text-[27.8px] leading-[40px]">SkyRocket – Confidential – October 2022</span>
        <span className="text-[28px] leading-[40px] pt-[4px] font-semibold text-[#8a8a8a]">8</span>
      </div>
    </div>
  );
}
